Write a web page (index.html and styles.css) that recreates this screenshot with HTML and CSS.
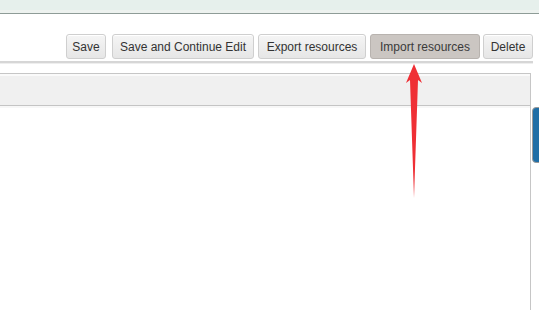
FILE: index.html
```html
<!DOCTYPE html>
<html>
<head>
<meta charset="utf-8">
<link rel="stylesheet" href="styles.css">
</head>
<body>
<div class="topbar"></div>
<div class="toolbar">
  <button class="btn btn-save">Save</button>
  <button class="btn btn-continue">Save and Continue Edit</button>
  <button class="btn btn-export">Export resources</button>
  <button class="btn btn-import">Import resources</button>
  <button class="btn btn-delete">Delete</button>
</div>
<div class="separator"></div>
<div class="panel">
  <div class="panel-head"></div>
  <div class="panel-body"></div>
</div>
<div class="side-tab"></div>
<svg class="arrow" width="20" height="140" viewBox="0 0 20 140">
  <polygon points="9,0 17,19 13,16 9,134 5,16 1,19" fill="#ef2f35"/>
</svg>
</body>
</html>
```
FILE: styles.css
```css
html, body {
  margin: 0;
  padding: 0;
  background: #ffffff;
  font-family: "Liberation Sans", Arial, sans-serif;
  overflow: hidden;
}
body {
  position: relative;
  width: 539px;
  height: 310px;
}
.topbar {
  height: 10px;
  background: #e6f0ec;
  border-bottom: 3px solid #edf2ef;
  box-shadow: 0 1px 0 #8e9c97;
  margin-bottom: 1px;
}
.toolbar {
  display: flex;
  justify-content: flex-end;
  padding: 20px 6px 0 0;
  height: 26px;
}
.btn {
  font-family: "Liberation Sans", Arial, sans-serif;
  font-size: 12px;
  color: #333333;
  height: 25px;
  padding: 0;
  border: 1px solid #cfcfcf;
  border-radius: 3px;
  background: linear-gradient(#f5f5f5, #e6e6e6);
  box-shadow: inset 0 1px 0 #ffffff;
  margin: 0;
  text-align: center;
  white-space: nowrap;
}
.btn-save { width: 40px; }
.btn-continue { width: 142px; margin-left: 6px; }
.btn-export { width: 108px; margin-left: 4px; }
.btn-import {
  width: 110px;
  margin-left: 4px;
  background: #cbc6c2;
  border-color: #b8b3af;
  box-shadow: none;
  color: #3a3a3a;
}
.btn-delete { width: 50px; margin-left: 3px; }
.separator {
  margin: 1px 6px 0 0;
  height: 2px;
  background: #d6d6d6;
  border-bottom: 1px solid #eeeeee;
}
.panel {
  margin: 9px 8px 0 0;
  border: 1px solid #c6c6c6;
  border-left: none;
  border-bottom: none;
  height: 240px;
}
.panel-head {
  height: 29px;
  background: #f0f0f0;
  border-top: 2px solid #fafafa;
  border-bottom: 1px solid #c4c4c4;
}
.panel-body {
  border-top: 2px solid #f7f7f7;
}
.side-tab {
  position: absolute;
  left: 532px;
  top: 107px;
  width: 10px;
  height: 54px;
  background: #1f6ea6;
  border: 1px solid #9a9a9a;
  border-radius: 4px;
}
.arrow {
  position: absolute;
  left: 405px;
  top: 64px;
}
```
